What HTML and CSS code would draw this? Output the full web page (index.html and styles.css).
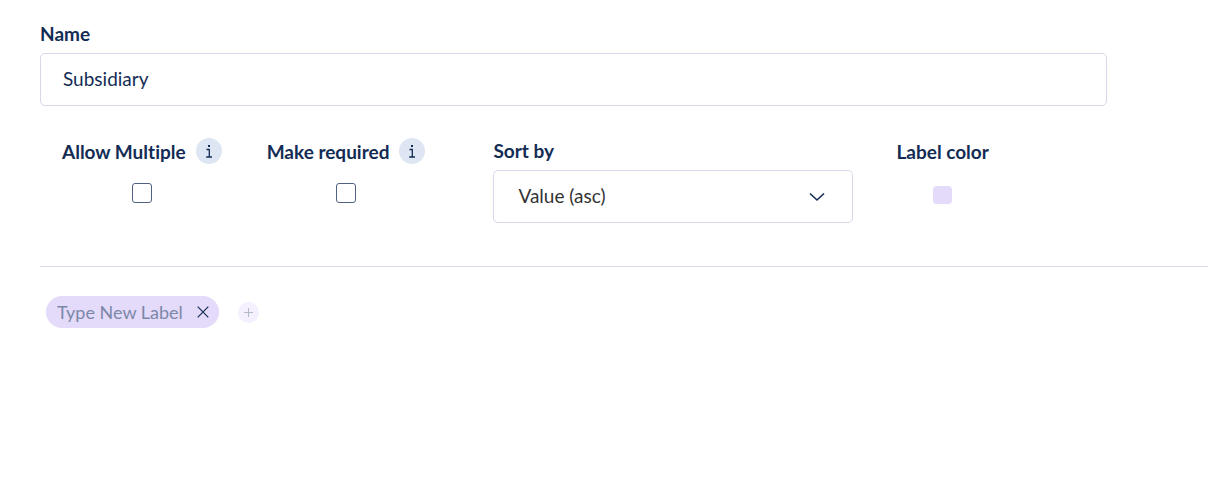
FILE: index.html
```html
<!DOCTYPE html>
<html lang="en">
<head>
<meta charset="utf-8">
<meta name="viewport" content="width=device-width, initial-scale=1">
<title>Label field settings</title>
<link rel="stylesheet" href="styles.css">
</head>
<body>
<main class="editor">
  <div class="name-field">
    <label class="label" for="name">Name</label>
    <input class="text-input" id="name" type="text" value="Subsidiary">
  </div>

  <div class="options">
    <div class="option">
      <div class="option-head">
        <label class="label" for="multiple">Allow Multiple</label>
        <button class="info" type="button" aria-label="About Allow Multiple">
          <svg width="26" height="26" viewBox="0 0 26 26"><rect x="12" y="7" width="2" height="2"/><path d="M10.5 11.5H13.3V19M10.2 19H16"/></svg>
        </button>
      </div>
      <input class="checkbox" id="multiple" type="checkbox">
    </div>
    <div class="option">
      <div class="option-head">
        <label class="label" for="required">Make required</label>
        <button class="info" type="button" aria-label="About Make required">
          <svg width="26" height="26" viewBox="0 0 26 26"><rect x="12" y="7" width="2" height="2"/><path d="M10.5 11.5H13.3V19M10.2 19H16"/></svg>
        </button>
      </div>
      <input class="checkbox" id="required" type="checkbox">
    </div>
    <div class="sort">
      <label class="label" for="sort">Sort by</label>
      <div class="select-wrap">
        <select class="select" id="sort">
          <option>Value (asc)</option>
        </select>
        <svg class="chevron" width="16" height="10" viewBox="0 0 16 10"><path d="M1 1.5L8 8L15 1.5"/></svg>
      </div>
    </div>
    <div class="option">
      <div class="option-head">
        <span class="label" id="color-label">Label color</span>
      </div>
      <button class="swatch" type="button" aria-labelledby="color-label"></button>
    </div>
  </div>

  <div class="labels">
    <div class="chip">
      <input class="chip-input" type="text" placeholder="Type New Label" aria-label="New label">
      <button class="chip-remove" type="button" aria-label="Remove label">
        <svg width="12" height="12" viewBox="0 0 12 12"><path d="M0.7 0.7L11.3 11.3M11.3 0.7L0.7 11.3"/></svg>
      </button>
    </div>
    <button class="add" type="button" aria-label="Add label">
      <svg width="9" height="9" viewBox="0 0 9 9"><path d="M4.5 0V9M0 4.5H9"/></svg>
    </button>
  </div>
</main>
</body>
</html>
```
FILE: styles.css
```css
* {
  box-sizing: border-box;
}

body {
  margin: 0;
  background: #fff;
  color: #132c54;
  font-family: Lato, sans-serif;
  font-size: 19px;
  line-height: 24px;
  font-variant-ligatures: none;
}

input,
select,
button {
  margin: 0;
  font: inherit;
  color: inherit;
}

button {
  display: flex;
  align-items: center;
  justify-content: center;
  flex: none;
  padding: 0;
  border: 0;
  cursor: pointer;
}

svg {
  display: block;
  fill: none;
  stroke: #132c54;
}

.editor {
  padding: 22px 16px 24px 40px;
}

.label {
  font-weight: 700;
}

.name-field {
  display: flex;
  flex-direction: column;
  gap: 7px;
  margin-right: 101px;
}

.text-input,
.select {
  width: 100%;
  height: 53px;
  border: 1px solid #d6d9ea;
  border-radius: 5px;
  background: #fff;
}

.text-input {
  padding: 0 22px 2px;
}

.options {
  display: flex;
  align-items: flex-start;
  padding: 31px 0 43px 22px;
  border-bottom: 1px solid #d8dce6;
}

.option {
  display: flex;
  flex-direction: column;
  align-items: center;
  gap: 18px;
}

.option + .option {
  margin-left: 45px;
}

.option-head {
  display: flex;
  align-items: center;
  gap: 10px;
  height: 28px;
}

.option-head .label {
  padding-top: 2px;
}

.info {
  width: 26px;
  height: 26px;
  border-radius: 50%;
  background: #dee5f3;
}

.info svg {
  stroke-width: 1.3;
}

.info rect {
  fill: #132c54;
  stroke: none;
}

.checkbox {
  appearance: none;
  width: 20px;
  height: 20px;
  border: 1px solid #4f6381;
  border-radius: 3px;
  background: #fff;
}

.checkbox:checked {
  background: #132c54;
}

.sort {
  display: flex;
  flex-direction: column;
  gap: 7px;
  flex: 0 1 360px;
  margin: 2px 43px 0 68px;
}

.select-wrap {
  display: grid;
  align-items: center;
}

.select-wrap > * {
  grid-area: 1 / 1;
}

.select {
  appearance: none;
  padding: 0 56px 2px 24px;
  color: #333;
}

.chevron {
  justify-self: end;
  margin-right: 28px;
  stroke-width: 1.6;
  pointer-events: none;
}

.sort + .option {
  gap: 21px;
}

.swatch {
  width: 19px;
  height: 18px;
  border-radius: 4px;
  background: #e4dafa;
}

.labels {
  display: flex;
  align-items: center;
  gap: 19px;
  padding: 29px 6px;
}

.chip {
  display: flex;
  align-items: center;
  gap: 10px;
  height: 32px;
  padding: 0 10px 0 11px;
  border-radius: 16px;
  background: #e4dafa;
}

.chip-input {
  width: 130px;
  padding: 0;
  border: 0;
  background: transparent;
  font-size: 18px;
}

.chip-input::placeholder {
  color: #7c88a8;
  opacity: 1;
}

.chip-remove {
  background: transparent;
}

.chip-remove svg {
  stroke-width: 1.2;
}

.add {
  width: 21px;
  height: 21px;
  border-radius: 50%;
  background: #f4f0fd;
}

.add svg {
  stroke: #b3bac8;
}
```
